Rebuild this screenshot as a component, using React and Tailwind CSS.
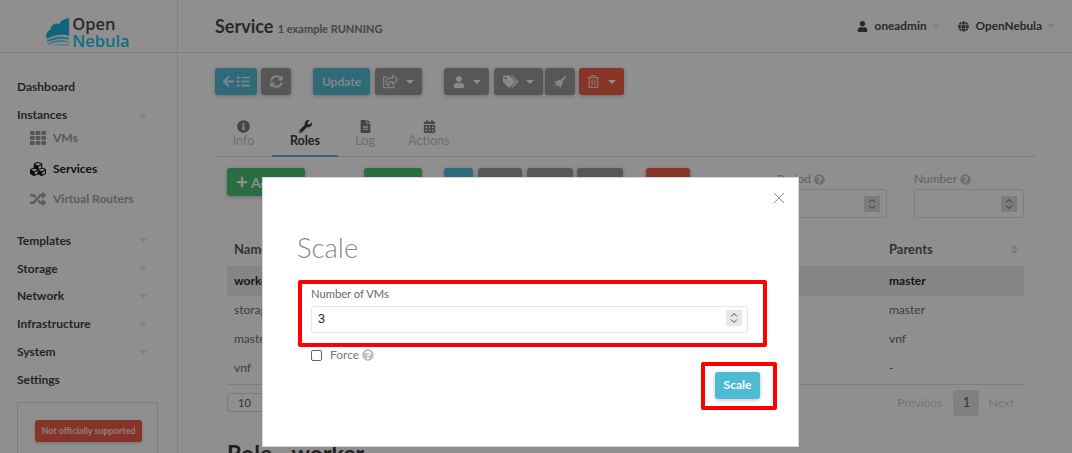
import {
  FaArrowLeft,
  FaCalendarAlt,
  FaCubes,
  FaFileAlt,
  FaGlobe,
  FaInfoCircle,
  FaList,
  FaPlus,
  FaQuestionCircle,
  FaRandom,
  FaRegShareSquare,
  FaRegTrashAlt,
  FaSort,
  FaSyncAlt,
  FaTags,
  FaTh,
  FaUser,
  FaWrench,
} from 'react-icons/fa'

const Caret = ({ up, className = '' }) => (
  <span
    className={`inline-block h-0 w-0 border-x-[4.5px] border-x-transparent ${
      up ? 'border-b-[5px] border-b-[#e6e6e6]' : 'border-t-[5px] border-t-[#e6e6e6]'
    } ${className}`}
  />
)

const WhiteCaret = () => (
  <span className="inline-block h-0 w-0 border-x-[4px] border-t-[4px] border-x-transparent border-t-white" />
)

const Btn = ({ className = '', children }) => (
  <div className={`flex h-[27px] items-center justify-center gap-2 rounded-[3px] font-bold text-white shadow-[0_1px_4px_rgba(0,0,0,0.25)] ${className}`}>
    {children}
  </div>
)

const Spinner = ({ bg = 'bg-[#e6e6ec]' }) => (
  <div className={`flex h-[16px] w-[16px] items-center justify-center ${bg}`}>
    <svg width="8" height="12" viewBox="0 0 8 12" fill="none" stroke="#555" strokeWidth="1">
      <path d="M1 4.5 L4 1.5 L7 4.5" />
      <path d="M1 7.5 L4 10.5 L7 7.5" />
    </svg>
  </div>
)

const BroomIcon = () => (
  <svg width="14" height="14" viewBox="0 0 14 14" fill="white" opacity="0.9">
    <path d="M12.6 0.6 L13.4 1.4 L9.6 6.4 L8 4.9 Z" />
    <path d="M7.2 4.6 L10 7.2 L7.4 13 L5.6 10.2 L1 11 L4 8.6 L0.8 7.4 Z" />
  </svg>
)

function Logo() {
  return (
    <div className="mt-[11px] flex items-center justify-center gap-[2px]">
      <svg width="24" height="30" viewBox="0 0 26 31">
        <path d="M25 0 V20 C18 17 8 19 1 23 C-1 19 1 14 5 13 C5 8 10 5 14 7 C16 3 20 1 25 0 Z" fill="#14b4dc" />
        <path d="M1 25 C8 20 18 19 25 22 V24 C18 22 8 23 1 27 Z" fill="#50c4e0" />
        <path d="M2 28 C9 24 18 23 25 26 V27.5 C18 25.5 10 26 3 29.5 Z" fill="#80d4e8" />
        <path d="M6 30.5 C12 28 19 27.5 25 29 V30.5 Z" fill="#b0e0ec" />
      </svg>
      <div className="font-['Open_Sans',sans-serif] text-[16.5px] leading-[17px] font-semibold">
        <div className="text-[#444]">Open</div>
        <div className="text-[#11c4f0]">Nebula</div>
      </div>
    </div>
  )
}

function Sidebar() {
  const collapsed = ['Templates', 'Storage', 'Network', 'Infrastructure', 'System']
  return (
    <aside className="flex w-[178px] shrink-0 flex-col border-r border-[#e0e0e0] text-[12px] font-bold text-[#3a3a3a]">
      <div className="flex h-[53px] shrink-0 items-center justify-center border-b border-[#e0e0e0] pr-[1px]">
        <Logo />
      </div>
      <div className="flex shrink-0 flex-col pl-[17px] pr-[30px] pt-[20px]">
        <div className="flex h-[28px] items-center">Dashboard</div>
        <div className="flex h-[28px] items-center justify-between">
          Instances
          <Caret up />
        </div>
        <div className="flex h-[18px] items-center gap-[7px] pl-[13px] text-[#9a9a9a]">
          <FaTh className="h-[16px] w-[16px]" />
          <span>VMs</span>
        </div>
        <div className="mt-[13px] flex h-[18px] items-center gap-[7px] pl-[13px] text-[#111]">
          <FaCubes className="h-[16px] w-[16px]" />
          <span>Services</span>
        </div>
        <div className="mt-[12px] mb-[19px] flex h-[18px] items-center gap-[7px] pl-[13px] text-[#a3a3a3]">
          <FaRandom className="h-[16px] w-[16px]" />
          <span>Virtual Routers</span>
        </div>
        {collapsed.map((item) => (
          <div key={item} className="flex h-[27.8px] items-center justify-between">
            {item}
            <Caret />
          </div>
        ))}
        <div className="flex h-[28px] items-center">Settings</div>
      </div>
      <div className="mt-[8px] mr-[19px] ml-[17px] h-[60px] shrink-0 border border-[#dcdcdc] px-[17px] pt-[17px]">
        <div className="flex h-[22px] w-[107px] items-center justify-center rounded-[3px] bg-[#ec5840] text-[9px] whitespace-nowrap text-white/80 shadow-[0_1px_3px_rgba(0,0,0,0.2)]">
          Not officially supported
        </div>
      </div>
    </aside>
  )
}

function TopBar() {
  return (
    <header className="flex h-[53px] items-center border-b border-[#e0e0e0] pl-[37px] pr-[17px]">
      <h1 className="text-[18px] font-bold text-[#444]">
        Service <span className="text-[11px] font-bold text-[#777]">1 example RUNNING</span>
      </h1>
      <div className="ml-auto flex items-center text-[11.8px] font-bold text-[#444]">
        <FaUser className="mr-[7px] h-[11px] w-[11px]" />
        oneadmin
        <Caret className="mr-[18px] ml-[5px]" />
        <FaGlobe className="mr-[7px] h-[11px] w-[11px]" />
        OpenNebula
        <Caret className="ml-[5px]" />
      </div>
    </header>
  )
}

function Toolbar() {
  return (
    <div className="mt-[15px] flex pl-[37px]">
      <Btn className="w-[42px] gap-[2px] bg-[#4dbbd3]">
        <FaArrowLeft className="h-[13px] w-[13px] opacity-80" />
        <FaList className="h-[13px] w-[13px] opacity-80" />
      </Btn>
      <Btn className="ml-[4px] w-[30px] bg-[#989898]">
        <FaSyncAlt className="h-[13px] w-[13px] opacity-80" />
      </Btn>
      <Btn className="ml-[22px] w-[57px] bg-[#4dbbd3] text-[12px] text-white/80">Update</Btn>
      <Btn className="ml-[5px] w-[47px] bg-[#989898]">
        <FaRegShareSquare className="h-[15px] w-[15px] opacity-80" />
        <WhiteCaret />
      </Btn>
      <Btn className="ml-[22px] w-[45px] bg-[#989898]">
        <FaUser className="h-[12px] w-[12px] opacity-90" />
        <WhiteCaret />
      </Btn>
      <Btn className="ml-[5px] w-[49px] bg-[#989898]">
        <FaTags className="h-[15px] w-[15px] opacity-90" />
        <WhiteCaret />
      </Btn>
      <Btn className="ml-[2px] w-[30px] bg-[#989898]">
        <BroomIcon />
      </Btn>
      <Btn className="ml-[4px] w-[45px] bg-[#f05a40]">
        <FaRegTrashAlt className="h-[13px] w-[13px] opacity-70" />
        <WhiteCaret />
      </Btn>
    </div>
  )
}

function Tabs() {
  const tabs = [
    { label: 'Info', Icon: FaInfoCircle, w: 'w-[57px]' },
    { label: 'Roles', Icon: FaWrench, w: 'w-[66px]', active: true },
    { label: 'Log', Icon: FaFileAlt, w: 'w-[54px]' },
    { label: 'Actions', Icon: FaCalendarAlt, w: 'w-[74px]' },
  ]
  return (
    <div className="mt-[25px] mr-[36px] ml-[37px] flex h-[37px] border-b border-[#e0e0e0] text-[12.5px]">
      {tabs.map(({ label, Icon, w, active }) => (
        <div
          key={label}
          className={`flex h-[37px] flex-col items-center ${w} ${
            active ? 'border-b-2 border-[#4dbbd3] font-bold text-[#333]' : 'text-[#c4c4c4]'
          }`}
        >
          <Icon className={`h-[13px] w-[13px] ${active ? 'text-[#333]' : 'text-[#777]'}`} />
          <span className="leading-[16px]">{label}</span>
        </div>
      ))}
    </div>
  )
}

function Field({ label, className = '' }) {
  return (
    <div className={`w-[110px] ${className}`}>
      <div className="flex h-[21px] items-center gap-[3px] pt-[1px] text-[12px] text-[#aaa]">
        {label}
        <FaQuestionCircle className="h-[11px] w-[11px] text-[#c4c4c4]" />
      </div>
      <div className="flex h-[29px] items-center justify-end rounded-[3px] border border-[#e0e0e0] pr-[6px]">
        <Spinner bg="bg-[#dcdce0]" />
      </div>
    </div>
  )
}

function Controls() {
  return (
    <div className="mt-[11px] flex pl-[49px]">
      <Btn className="h-[28px] w-[78px] justify-start gap-[3px] bg-[#43c06f] pl-[9px] text-[14px]">
        <FaPlus className="h-[12px] w-[12px]" />
        Add
      </Btn>
      <Btn className="ml-[59px] h-[28px] w-[58px] bg-[#43c06f]" />
      <Btn className="ml-[22px] h-[28px] w-[29px] bg-[#4dbbd3]" />
      <Btn className="ml-[5px] h-[28px] w-[44px] bg-[#989898]" />
      <Btn className="ml-[5px] h-[28px] w-[46px] bg-[#989898]" />
      <Btn className="ml-[4px] h-[28px] w-[46px] bg-[#989898]" />
      <Btn className="ml-[23px] h-[28px] w-[44px] bg-[#f05a40]" />
      <Field label="Period" className="ml-[87px]" />
      <Field label="Number" className="ml-[27px]" />
    </div>
  )
}

function RolesTable() {
  const rows = [
    { name: 'worker', parent: 'master', selected: true },
    { name: 'storage', parent: 'master' },
    { name: 'master', parent: 'vnf' },
    { name: 'vnf', parent: '-' },
  ]
  return (
    <div className="mr-[48px] ml-[49px] text-[12px]">
      <div className="flex h-[48px] items-end justify-between pb-[7px] pl-[7px] text-[13px] font-bold text-[#555]">
        <span>Name</span>
        <div className="flex w-[135px] items-center justify-between pr-[4px]">
          Parents
          <FaSort className="h-[11px] w-[11px] text-[#d4d4d4]" />
        </div>
      </div>
      {rows.map((row) => (
        <div
          key={row.name}
          className={`flex items-center justify-between pl-[7px] ${
            row.selected ? 'h-[30px] bg-[#ededed] font-bold text-[#222]' : 'h-[29px] pb-[2px] text-[#667]'
          }`}
        >
          <span>{row.name}</span>
          <span className="w-[135px]">{row.parent}</span>
        </div>
      ))}
      <div className="mt-[1px] flex h-[34px] items-start justify-between border-t border-[#e0e0e0]">
        <div className="mt-[8px] h-[19px] w-[40px] rounded-[3px] border border-[#d8d8d8] pl-[10px] text-[11px] leading-[17px] text-[#555]">
          10
        </div>
        <div className="mt-[5px] flex items-center text-[#d0d0d0]">
          <span>Previous</span>
          <span className="mr-[9px] ml-[11px] flex h-[26px] w-[26px] items-center justify-center rounded-[3px] bg-[#e4e4e4] text-[13px] text-[#555]">
            1
          </span>
          <span className="mr-[10px]">Next</span>
        </div>
      </div>
      <h2 className="mt-[21px] text-[23px] leading-[28px] font-bold text-[#333]">Role - worker</h2>
    </div>
  )
}

function ScaleModal() {
  return (
    <div className="absolute top-[177px] left-[262px] h-[270px] w-[537px] border border-[#d6d6d6] bg-white pt-[52px] pl-[34px] pr-[50px]">
      <svg className="absolute top-[14px] right-[13px]" width="12" height="12" viewBox="0 0 12 12" stroke="#888" strokeWidth="0.9">
        <path d="M1 1 L11 11 M11 1 L1 11" />
      </svg>
      <h3 className="text-[27.5px] leading-[36px] font-light text-[#888]">Scale</h3>
      <div className="mt-[20px] pl-[14px]">
        <div className="text-[11.2px] leading-[16px] text-[#666]">Number of VMs</div>
        <div className="relative mt-[3px]">
          <input
            readOnly
            value="3"
            className="h-[27px] w-full rounded-[3px] border border-[#e6e6e6] pl-[6px] font-['Liberation_Sans',sans-serif] text-[12.5px] text-[#222] outline-none"
          />
          <div className="absolute top-[5px] right-[6px]">
            <Spinner />
          </div>
        </div>
        <div className="mt-[16px] flex h-[13px] items-center text-[12px] text-[#777]">
          <span className="h-[11px] w-[11px] rounded-[2px] border border-[#666] bg-white" />
          <span className="ml-[8px]">Force</span>
          <FaQuestionCircle className="ml-[3px] h-[12px] w-[12px] text-[#c0c0c0]" />
        </div>
      </div>
      <div className="-mr-[12px] mt-[10px] flex justify-end">
        <Btn className="w-[45px] bg-[#4dbbd3] text-[12px]">Scale</Btn>
      </div>
    </div>
  )
}

export default function App() {
  return (
    <div className="relative h-[453px] w-[1072px] overflow-hidden bg-white font-['Lato',sans-serif]">
      <div className="flex h-full">
        <Sidebar />
        <main className="min-w-0 flex-1">
          <TopBar />
          <Toolbar />
          <Tabs />
          <Controls />
          <RolesTable />
        </main>
      </div>
      <div className="absolute inset-0 bg-[#0a0a0a]/46" />
      <ScaleModal />
      <div className="pointer-events-none absolute top-[280px] left-[298px] h-[67px] w-[469px] rounded-[2px] border-4 border-[#ff0000]" />
      <div className="pointer-events-none absolute top-[362px] left-[701px] h-[48px] w-[76px] rounded-[2px] border-4 border-[#ff0000]" />
    </div>
  )
}
